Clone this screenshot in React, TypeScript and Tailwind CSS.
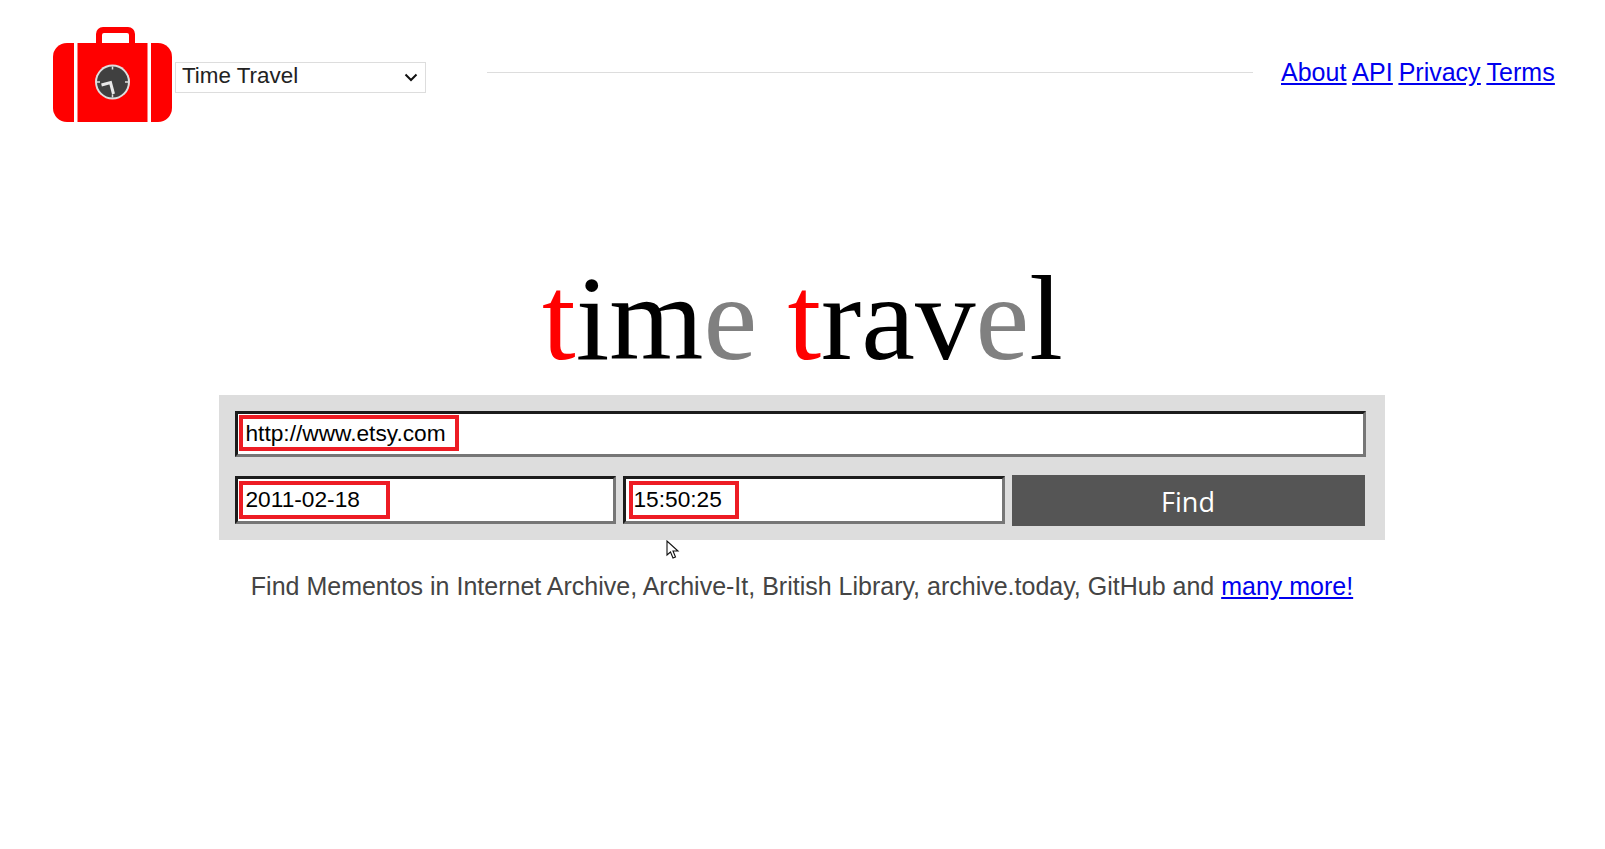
export default function App() {
  return (
    <div className="min-h-[849px] bg-white font-['Liberation_Sans',Arial,sans-serif]">
      <Header />
      <main className="flex flex-col items-center">
        <h1 className="mt-[98px] text-center font-['Liberation_Serif','Times_New_Roman',serif] text-[121px] leading-[150px] text-black">
          <span className="text-[#ff0000]">t</span>im<span className="text-[#808080]">e</span>{" "}
          <span className="text-[#ff0000]">t</span>rav<span className="text-[#808080]">e</span>l
        </h1>
        <SearchForm />
        <p className="mr-[1px] mt-[28px] text-[25px] leading-[36px] text-[#444444]">
          Find Mementos in Internet Archive, Archive-It, British Library, archive.today, GitHub and{" "}
          <a href="#" className="text-[#0000ee] underline">many more!</a>
        </p>
      </main>
    </div>
  );
}

function Header() {
  return (
    <header className="flex h-[145px] items-start pl-[53px] pr-[50px] pt-[27px]">
      <Logo />
      <div className="relative ml-[3px] mt-[35px] h-[31px] w-[251px]">
        <select
          defaultValue="Time Travel"
          className="h-full w-full appearance-none border border-solid border-[#dddddd] bg-white pb-[4px] pl-[6px] text-[22.4px] leading-[26px] text-[#222222]"
        >
          <option>Time Travel</option>
        </select>
        <svg viewBox="0 0 14 9" className="pointer-events-none absolute right-[8px] top-[11px] h-[9px] w-[14px]">
          <path d="M1.5 1.5 L7 7 L12.5 1.5" fill="none" stroke="#111111" strokeWidth="2" />
        </svg>
      </div>
      <div className="ml-[61px] mt-[45px] h-px w-[766px] bg-[#dddddd]" />
      <nav className="ml-[28px] mt-[28px] flex gap-[6px] text-[25px] leading-[34px] text-[#0000ee] underline">
        <a href="#">About</a>
        <a href="#">API</a>
        <a href="#">Privacy</a>
        <a href="#">Terms</a>
      </nav>
    </header>
  );
}

function SearchForm() {
  return (
    <form className="relative mr-[2px] mt-[2px] flex h-[145px] w-[1166px] flex-col gap-[18px] bg-[#dddddd] pl-[16px] pr-[19px] pt-[16px]">
      <Field value="http://www.etsy.com" box="h-[36px] w-[220px]" className="h-[46px] w-full" />
      <div className="flex items-start">
        <Field value="2011-02-18" box="mt-[1px] h-[38px] w-[151px]" className="mt-[1px] h-[48px] w-[381px]" />
        <Field value="15:50:25" box="ml-[2px] mt-[1px] h-[38px] w-[110px]" className="ml-[7px] mt-[1px] h-[48px] w-[382px]" />
        <button
          type="button"
          className="ml-[7px] h-[51px] w-[353px] bg-[#555555] pt-[3px] font-['Open_Sans',sans-serif] text-[27px] text-white"
        >
          Find
        </button>
      </div>
      <Cursor />
    </form>
  );
}

function Field({ value, box, className }: { value: string; box: string; className: string }) {
  return (
    <div className={`relative ${className}`}>
      <input
        readOnly
        value={value}
        className="h-full w-full border-[3px] border-solid border-b-[#767676] border-l-[#1c1c1c] border-r-[#767676] border-t-[#1c1c1c] bg-white pb-[2px] pl-[8px] text-[22.7px] leading-none text-black outline-none"
      />
      {/* red annotation drawn on the screenshot */}
      <div className={`pointer-events-none absolute left-[4px] top-[4px] border-[4px] border-solid border-[#ed1c24] ${box}`} />
    </div>
  );
}

function Cursor() {
  return (
    <svg viewBox="0 0 14 20" className="absolute left-[447px] top-[145px] h-[20px] w-[14px]">
      <path d="M1 1 L1 15 L4.5 12 L7 18 L9.5 17 L7 11 L12 11 Z" fill="#fff" stroke="#111" strokeWidth="1.1" />
    </svg>
  );
}

function Logo() {
  return (
    <svg viewBox="0 0 119 95" className="h-[95px] w-[119px] shrink-0">
      <path
        fill="#ff0000"
        d="M50 0h25a7 7 0 0 1 7 7v9h-6V8a2 2 0 0 0-2-2H51a2 2 0 0 0-2 2v8h-6V7a7 7 0 0 1 7-7Z"
      />
      <path fill="#ff0000" d="M14 16h7v79h-7A14 14 0 0 1 0 81V30a14 14 0 0 1 14-14Z" />
      <rect x="24.5" y="16" width="70" height="79" fill="#ff0000" />
      <path fill="#ff0000" d="M98 16h7a14 14 0 0 1 14 14v51a14 14 0 0 1-14 14h-7Z" />
      <circle cx="59.5" cy="55" r="17.5" fill="#dedede" />
      <circle cx="59.5" cy="55" r="15.5" fill="#404040" />
      <path d="M59.5 39.5v3M59.5 67.5v3M44 55h3M72 55h3" stroke="#dedede" strokeWidth="1.5" />
      <path d="M48.5 58 L57.5 55.5 L60.5 67" fill="none" stroke="#e8e8e8" strokeWidth="3" />
    </svg>
  );
}
